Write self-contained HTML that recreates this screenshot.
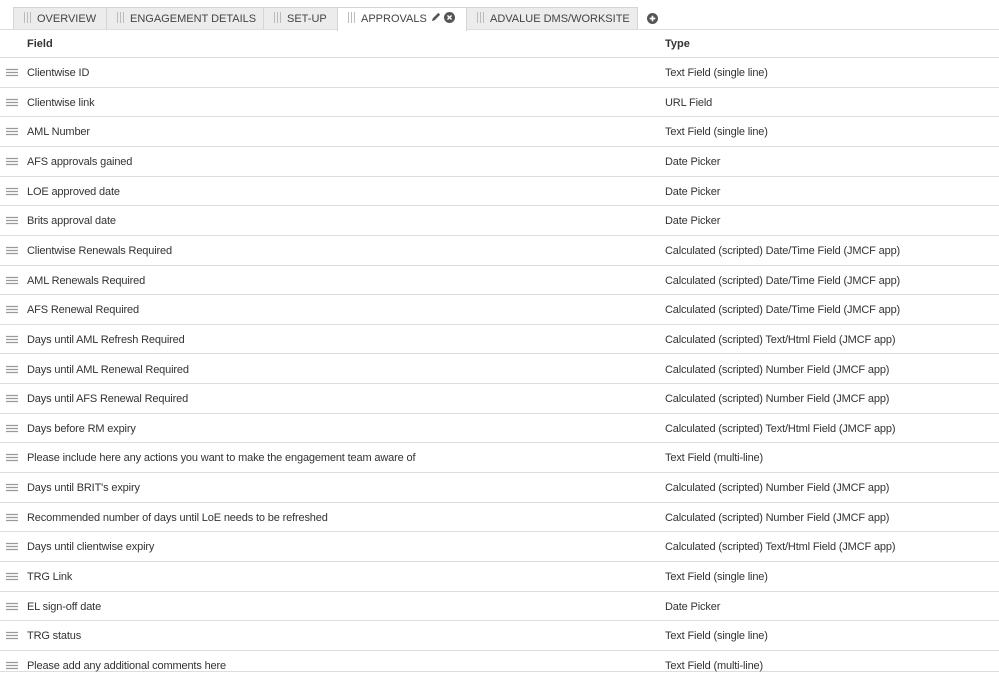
<!DOCTYPE html>
<html><head><style>
body{margin:0;width:999px;height:673px;overflow:hidden;background:#fff;font-family:"Liberation Sans",Arial,sans-serif;color:#333;position:relative}
.tabline{position:absolute;left:0;right:0;top:29px;height:1px;background:#ddd}
.tab{position:absolute;top:7px;height:22px;background:#ececec;border:1px solid #d5d5d5;border-bottom:none;font-size:11px;line-height:23px;color:#444;box-sizing:border-box;padding-left:10px;white-space:nowrap;overflow:hidden}
.tab.act{background:#fff;height:24px}
.bars{display:inline-block;width:9px;height:11px;margin-right:4px;vertical-align:-1px;background:repeating-linear-gradient(90deg,#bbb 0 1px,transparent 1px 3px)}
.hdr{position:absolute;top:30px;left:0;right:0;height:27px;border-bottom:1px solid #ddd;font-size:11px;font-weight:bold;color:#333}
.row{position:absolute;left:0;right:0;border-bottom:1px solid #ddd;font-size:11px;color:#333;letter-spacing:-0.15px}
.row span,.hdr span{position:absolute}
.f{left:27px}.t{left:665px}
.h{position:absolute;left:6px}
</style></head><body>
<div class="tabline"></div>
<div class="tab" style="left:13px;width:94px"><i class="bars"></i>OVERVIEW</div>
<div class="tab" style="left:106px;width:158px"><i class="bars"></i>ENGAGEMENT DETAILS</div>
<div class="tab" style="left:263px;width:75px"><i class="bars"></i>SET-UP</div>
<div class="tab act" style="left:337px;width:130px"><i class="bars"></i>APPROVALS <svg width="11" height="11" viewBox="0 0 12 12" style="vertical-align:-1px"><path d="M2 10l1-3 6-6 2 2-6 6z" fill="#555"/></svg> <svg width="11" height="11" viewBox="0 0 12 12" style="vertical-align:-1px"><circle cx="6" cy="6" r="6" fill="#555"/><path d="M3.8 3.8l4.4 4.4M8.2 3.8l-4.4 4.4" stroke="#fff" stroke-width="1.6"/></svg></div>
<div class="tab" style="left:466px;width:172px"><i class="bars"></i>ADVALUE DMS/WORKSITE</div>
<svg style="position:absolute;left:647px;top:13px" width="11" height="11" viewBox="0 0 12 12"><circle cx="6" cy="6" r="6" fill="#555"/><path d="M6 3v6M3 6h6" stroke="#fff" stroke-width="1.8"/></svg>
<div class="hdr"><span class="f" style="top:8px">Field</span><span class="t" style="top:8px">Type</span></div>
<div id="rows"></div>
<script>
var d=[["Clientwise ID","Text Field (single line)"],["Clientwise link","URL Field"],["AML Number","Text Field (single line)"],["AFS approvals gained","Date Picker"],["LOE approved date","Date Picker"],["Brits approval date","Date Picker"],["Clientwise Renewals Required","Calculated (scripted) Date/Time Field (JMCF app)"],["AML Renewals Required","Calculated (scripted) Date/Time Field (JMCF app)"],["AFS Renewal Required","Calculated (scripted) Date/Time Field (JMCF app)"],["Days until AML Refresh Required","Calculated (scripted) Text/Html Field (JMCF app)"],["Days until AML Renewal Required","Calculated (scripted) Number Field (JMCF app)"],["Days until AFS Renewal Required","Calculated (scripted) Number Field (JMCF app)"],["Days before RM expiry","Calculated (scripted) Text/Html Field (JMCF app)"],["Please include here any actions you want to make the engagement team aware of","Text Field (multi-line)"],["Days until BRIT's expiry","Calculated (scripted) Number Field (JMCF app)"],["Recommended number of days until LoE needs to be refreshed","Calculated (scripted) Number Field (JMCF app)"],["Days until clientwise expiry","Calculated (scripted) Text/Html Field (JMCF app)"],["TRG Link","Text Field (single line)"],["EL sign-off date","Date Picker"],["TRG status","Text Field (single line)"],["Please add any additional comments here","Text Field (multi-line)"]];
var h="";d.forEach(function(r,i){var top=58+i*29.65;var hh=(i==d.length-1)?(671-top):28.65;h+='<div class="row" style="top:'+top+'px;height:'+hh+'px"><svg class="h" style="top:10px" width="12" height="9"><path d="M0 1.5h12M0 4.5h12M0 7.5h12" stroke="#999" stroke-width="1.2"/></svg><span class="f" style="top:9px">'+r[0]+'</span><span class="t" style="top:9px">'+r[1]+'</span></div>';});
document.getElementById("rows").innerHTML=h;
</script>
</body></html>
